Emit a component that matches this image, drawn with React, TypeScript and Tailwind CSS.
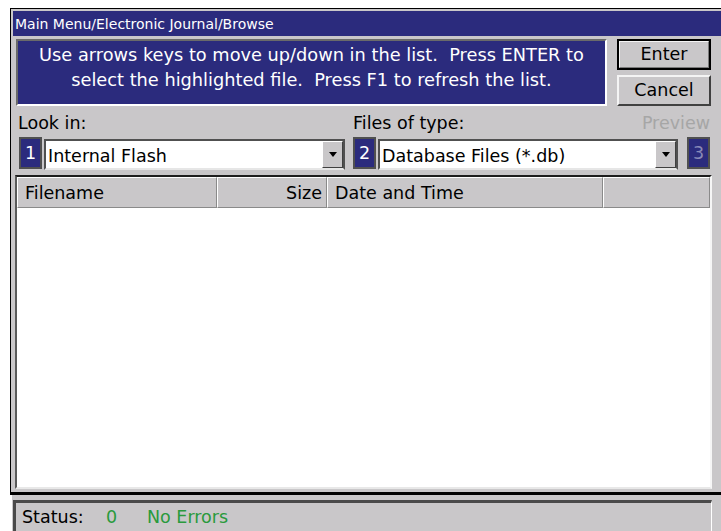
import React from "react";

const Badge = ({ n, dim = false }: { n: string; dim?: boolean }) => (
  <div className="w-[23px] h-[32px] shrink-0 border-2 border-[#505050] bg-[#2b2b7d] flex items-center justify-center">
    <span className={dim ? "text-[17.5px] text-[#8a8ab8]" : "text-[17.5px] text-white"}>{n}</span>
  </div>
);

const Combo = ({ value, w }: { value: string; w: string }) => (
  <div className={`${w} mt-[2px] h-[31px] shrink-0 flex bg-white border-2 border-t-[#505050] border-l-[#505050] border-r-[#505050] border-b-[#e6e6e6]`}>
    <div className="flex-1 pl-[2px] pt-[1px] text-[17.5px] leading-[28px] text-black whitespace-nowrap">{value}</div>
    <div className="w-[21px] h-full bg-[#c9c7c9] border border-t-white border-l-white border-r-[#404040] border-b-[#404040] flex items-center justify-center">
      <svg width="8" height="5" viewBox="0 0 8 5">
        <path d="M0 0H8L4 5Z" fill="#000" />
      </svg>
    </div>
  </div>
);

export default function App() {
  return (
    <div className="w-[721px] h-[531px] overflow-hidden bg-white pt-[8px] pl-[10px] font-['DejaVu_Sans',sans-serif] flex flex-col">
      <div className="h-[487px] shrink-0 flex flex-col border-l border-t border-b-[3px] border-black bg-[#c9c7c9]">
        {/* title bar */}
        <div className="mt-[2px] ml-[2px] h-[25px] bg-[#2b2b7d] text-white text-[14px] leading-[26px] pl-[2px] whitespace-nowrap">
          Main Menu/Electronic Journal/Browse
        </div>

        {/* instructions + buttons */}
        <div className="mt-[3px] pl-[5px] flex gap-[10px]">
          <div className="w-[591px] h-[67px] bg-[#2b2b7d] border-2 border-t-[#6a6a6a] border-l-[#6a6a6a] border-b-white border-r-white text-white text-[17.75px] leading-[25px] text-center pt-[2px] whitespace-pre">
            {"Use arrows keys to move up/down in the list.  Press ENTER to\nselect the highlighted file.  Press F1 to refresh the list."}
          </div>
          <div className="w-[94px] flex flex-col gap-[5px]">
            <div className="h-[31px] border-2 border-black">
              <div className="h-full border border-t-[#f4f4f4] border-l-[#f4f4f4] border-r-[#7a7a7a] border-b-[#7a7a7a] text-[17.5px] leading-[25px] text-center text-black">
                Enter
              </div>
            </div>
            <div className="h-[31px] border-2 border-t-[#f4f4f4] border-l-[#f4f4f4] border-r-[#404040] border-b-[#404040] text-[17.5px] leading-[27px] text-center text-black">
              Cancel
            </div>
          </div>
        </div>

        {/* labels */}
        <div className="mt-[7px] h-[20px] flex text-[17.5px] leading-[21px] text-black pl-[7px] pr-[11px]">
          <div className="w-[335px]">Look in:</div>
          <div className="flex-1">Files of type:</div>
          <div className="text-[#a6a6a6]">Preview</div>
        </div>

        {/* combo row */}
        <div className="mt-[4px] h-[33px] flex items-start pl-[8px]">
          <Badge n="1" />
          <div className="w-[2px]" />
          <Combo value="Internal Flash" w="w-[301px]" />
          <div className="w-[8px]" />
          <Badge n="2" />
          <div className="w-[2px]" />
          <Combo value="Database Files (*.db)" w="w-[300px]" />
          <div className="w-[9px]" />
          <Badge n="3" dim />
        </div>

        {/* file list */}
        <div className="mt-[5px] ml-[4px] w-[697px] h-[314px] flex flex-col border-2 border-t-[#1e1e1e] border-l-[#5a5a5a] border-b-[#e8e8e8] border-r-[#f6f6f6]">
          <div className="h-[31px] flex text-[17.5px] leading-[30px] text-black">
            <div className="w-[200px] pl-[7px] border border-t-white border-l-white border-r-[#8a8a8a] border-b-[#8a8a8a]">Filename</div>
            <div className="w-[110px] pr-[4px] text-right border border-t-white border-l-white border-r-[#8a8a8a] border-b-[#8a8a8a]">Size</div>
            <div className="w-[276px] pl-[7px] border border-t-white border-l-white border-r-[#8a8a8a] border-b-[#8a8a8a]">Date and Time</div>
            <div className="flex-1 border border-t-white border-l-white border-r-[#8a8a8a] border-b-[#8a8a8a]" />
          </div>
          <div className="flex-1 bg-white" />
        </div>
      </div>

      {/* status bar */}
      <div className="flex-1 ml-[2px] bg-[#c9c7c9] pt-[5px] pl-[1px] pr-[9px]">
        <div className="h-full flex border-t-[3px] border-l-[3px] border-[#4a4a4a] border-r border-r-white text-[17.5px] leading-[28px] pl-[6px]">
          <span className="w-[84px] text-black">Status:</span>
          <span className="w-[41px] text-[#2a9a3c]">0</span>
          <span className="text-[#2a9a3c]">No Errors</span>
        </div>
      </div>
    </div>
  );
}
